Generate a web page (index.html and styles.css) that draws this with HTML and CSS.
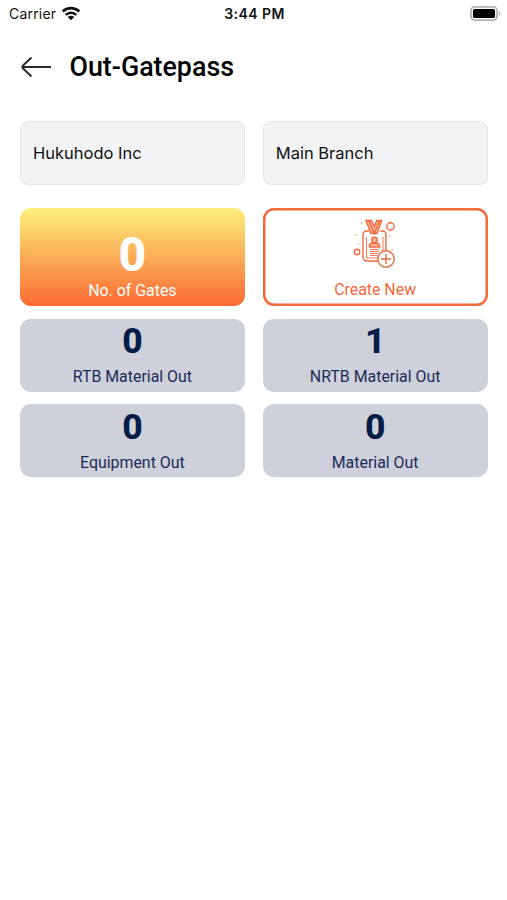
FILE: index.html
```html
<!DOCTYPE html>
<html lang="en">
<head>
<meta charset="UTF-8">
<title>Out-Gatepass</title>
<link rel="stylesheet" href="styles.css">
</head>
<body>

<div class="status-bar">
    <div class="carrier">
        <span>Carrier</span>
        <svg class="wifi" width="20" height="15" viewBox="0 0 20 15">
            <path d="M1.7 5.5a12 12 0 0 1 16.6 0" fill="none" stroke="#111" stroke-width="2.8"/>
            <path d="M4.7 8.9a7.6 7.6 0 0 1 10.6 0" fill="none" stroke="#111" stroke-width="2.5"/>
            <path d="M10 14.3l-3.2-3.2a4.6 4.6 0 0 1 6.4 0z" fill="#111"/>
        </svg>
    </div>
    <span class="time">3:44 PM</span>
    <svg class="battery" width="31" height="15" viewBox="0 0 31 15">
        <rect x=".9" y=".9" width="26.2" height="13.2" rx="4" fill="#fff" stroke="#b4b4b4" stroke-width="1.8"/>
        <rect x="3" y="3" width="22" height="9" rx="1.5" fill="#000"/>
        <path d="M29 5v5c1.8-.8 1.8-4.2 0-5z" fill="#b4b4b4"/>
    </svg>
</div>

<header class="header">
    <svg class="back" width="31" height="22" viewBox="0 0 31 22">
        <path d="M10.5 1.5L1.8 9.8q-1 1.2 0 2.4l8.7 8.3M1.5 11H30" fill="none" stroke="#2a2a2a" stroke-width="2"/>
    </svg>
    <h1>Out-Gatepass</h1>
</header>

<main class="content">
    <div class="field">Hukuhodo Inc</div>
    <div class="field">Main Branch</div>

    <div class="card gates">
        <span class="count">0</span>
        <span class="label">No. of Gates</span>
    </div>
    <div class="card create">
        <svg class="badge" width="44" height="50" viewBox="0 0 44 50" fill="none" stroke="#f2693c" stroke-width="1.4">
            <path d="M16 12h-2.5a3.5 3.5 0 0 0-3.5 3.5v23a3.5 3.5 0 0 0 3.5 3.5h13M27 12h2.5a3.5 3.5 0 0 1 3.5 3.5v17"/>
            <path d="M13.500 18v21h11M30 18v15" stroke-width=".9"/>
            <path d="M13 1.500h5.500l2.900 6 2.300-6h5l-4.700 13h-6z" fill="#f8b69d"/>
            <path d="M16 2l5 12M26.500 2l-5 12"/>
            <circle cx="21.5" cy="21" r="2.7" fill="#f8b69d"/>
            <path d="M16.500 28v-1.500c0-2 2-2.500 5-2.500s5 .5 5 2.500v1.500z" fill="#f8b69d"/>
            <path d="M17 30.500h9M17 32.500h9M17 34.500h8M17 36.500h7" stroke-width=".9"/>
            <circle cx="37.5" cy="7.5" r="3.7"/>
            <circle cx="4" cy="33" r="2.7"/>
            <circle cx="33" cy="40" r="8.2" fill="#fff"/>
            <path d="M33 35v10M28 40h10"/>
            <path d="M8 4h1.500M2 16h1.500M4.500 25h1.500M36 17h1.500M38.500 31h1.500" stroke="#f9a78d"/>
        </svg>
        <span class="label">Create New</span>
    </div>

    <div class="card stat">
        <span class="count">0</span>
        <span class="label">RTB Material Out</span>
    </div>
    <div class="card stat">
        <span class="count">1</span>
        <span class="label">NRTB Material Out</span>
    </div>
    <div class="card stat">
        <span class="count">0</span>
        <span class="label">Equipment Out</span>
    </div>
    <div class="card stat">
        <span class="count">0</span>
        <span class="label">Material Out</span>
    </div>
</main>

</body>
</html>
```

FILE: styles.css
```css
* {
    box-sizing: border-box;
}

body {
    margin: 0;
    background-color: #fff;
    color: #111;
    font-family: Roboto, sans-serif;
}

.status-bar {
    display: grid;
    grid-template-columns: 1fr auto 1fr;
    align-items: center;
    height: 27px;
    padding: 0 7px 0 9px;
    font-family: Inter, sans-serif;
    font-size: 14px;
}

.carrier {
    display: flex;
    align-items: center;
    gap: 5px;
    letter-spacing: 0.2px;
}

.time {
    font-weight: 600;
    letter-spacing: 0.45px;
}

.battery {
    justify-self: end;
    margin-right: -1px;
}

.header {
    display: flex;
    align-items: center;
    gap: 17.5px;
    height: 80px;
    padding-left: 21px;
}

.header h1 {
    margin: 0;
    font-size: 26.8px;
    font-weight: 500;
    color: #000;
}

.content {
    display: grid;
    grid-template-columns: 1fr 1fr;
    column-gap: 18px;
    row-gap: 12.5px;
    padding: 13.5px 19.5px 0 20px;
}

.field {
    height: 64px;
    margin-bottom: 11px;
    padding-left: 12px;
    border: 1px solid #e3e5e6;
    border-radius: 8px;
    background-color: #f2f3f5;
    font-family: Inter, sans-serif;
    font-size: 16.5px;
    line-height: 62px;
}

.card {
    display: flex;
    flex-direction: column;
    align-items: center;
    border-radius: 11px;
}

.count {
    font-weight: 800;
}

.label {
    font-size: 15.9px;
    line-height: 20px;
}

.gates {
    height: 98px;
    padding-top: 21px;
    background: linear-gradient(#fcf07a, #fa6a33);
    color: #fff;
}

.gates .count {
    font-size: 48px;
    line-height: 52px;
}

.create {
    height: 98px;
    padding-top: 11px;
    box-shadow: inset 0 0 0 2.5px #f2693c;
    color: #f2693c;
}

.badge {
    margin-bottom: 11px;
}

.stat {
    height: 73px;
    padding-top: 4.5px;
    background-color: #ced1da;
    color: #1c2b59;
}

.stat .count {
    margin-bottom: 8px;
    font-size: 35.5px;
    line-height: 36px;
    color: #041c48;
}
```
